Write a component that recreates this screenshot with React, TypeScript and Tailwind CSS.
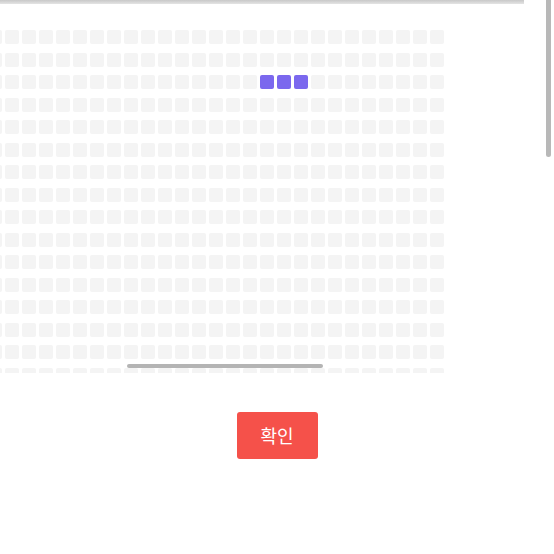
import React from 'react';

const COLS = 27;
const ROWS = 16;

// selected seats: row 2, cols 16-18
const selected = new Set(['2-16', '2-17', '2-18']);

function Seat({ active }: { active: boolean }) {
  return (
    <div
      className={`h-[14px] w-[14px] rounded-[2px] ${
        active ? 'bg-[#7b68ee]' : 'bg-[#f4f4f4]'
      }`}
    />
  );
}

export default function App() {
  const rows = Array.from({ length: ROWS }, (_, r) => r);
  const cols = Array.from({ length: COLS }, (_, c) => c);

  return (
    <div className="flex h-[554px] w-[554px] bg-white font-['Noto_Sans_CJK_KR','Noto_Sans',sans-serif]">
      <div className="flex w-[545px] flex-col">
        {/* top bar */}
        <div className="h-[4px] w-[524px] bg-gradient-to-b from-[#c8c8c8] to-[#e4e4e4]" />

        {/* seat map */}
        <div className="relative mt-[26px] h-[343px] w-[446px] overflow-hidden">
          <div className="ml-[-12px] flex flex-col gap-y-[8.5px]">
            {rows.map((r) => (
              <div key={r} className="flex gap-x-[3px]">
                {cols.map((c) => (
                  <Seat key={c} active={selected.has(`${r}-${c}`)} />
                ))}
              </div>
            ))}
          </div>
          {/* horizontal scroll thumb */}
          <div className="absolute left-[127px] top-[334px] h-[4px] w-[196px] rounded-full bg-[#b4b4b4]" />
        </div>

        {/* confirm */}
        <div className="mt-[39px] flex w-[554px] justify-center">
          <button className="h-[47px] w-[81px] rounded-[3px] bg-[#f5514a] text-[18px] text-white">
            확인
          </button>
        </div>
      </div>

      {/* vertical scrollbar */}
      <div className="w-[9px] pl-[1px]">
        <div className="h-[157px] w-[5px] rounded-b-full bg-[#b8b8b8]" />
      </div>
    </div>
  );
}
